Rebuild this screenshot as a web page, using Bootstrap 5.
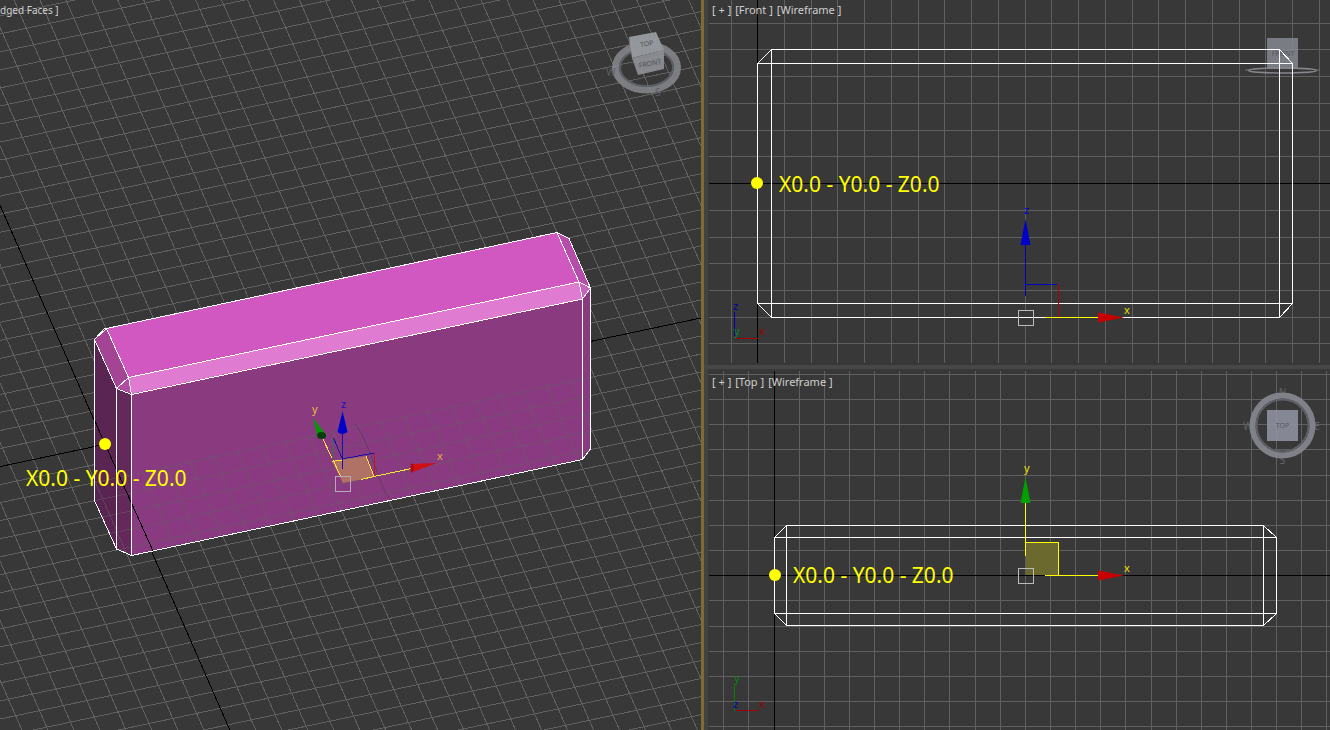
<!DOCTYPE html>
<html lang="en">
<head>
<meta charset="utf-8">
<meta name="viewport" content="width=device-width, initial-scale=1">
<title>Viewports</title>
<link rel="stylesheet" href="https://cdn.jsdelivr.net/npm/bootstrap@5.3.0/dist/css/bootstrap.min.css">
<style>
  body { background: #383838; font-family: "Noto Sans", sans-serif; }
  .workspace { display: grid; grid-template-columns: 701fr 629fr; }
  .ortho { display: grid; grid-template-rows: 1fr 1fr; border-left: 3px solid #7d6c34; }
  .viewport { background: #383838; min-height: 0; }
  .ortho .viewport { box-shadow: inset 4px 0 0 #424242; }
  .split { border-top: 4px solid #474747; }
  .vlabel { top: 2px; left: 8px; gap: 4px; z-index: 2; }
  .split .vlabel { top: 5px; }
  .vlabel button { border: 0; padding: 0; background: none; color: #cfcfcf; font-size: 11px; line-height: 16px; white-space: pre; }
  .flush { left: 0; }
  .flush button { font-size: 10px; }
  .grid line { stroke: #606060; }
  .grid .axis { stroke: #000; }
  .crisp { shape-rendering: crispEdges; }
  .wire { fill: none; stroke: #fff; }
  .coord { font-size: 21px; fill: #ff0; }
  .tick { font-size: 11px; }
  .cube { font-size: 7px; fill: #55585e; text-anchor: middle; }
  .compass { font-size: 10px; fill: #62666d; text-anchor: middle; }
</style>
</head>
<body>
<main class="workspace vw-100 vh-100 overflow-hidden">
  <section class="viewport position-relative overflow-hidden" aria-label="Perspective">
    <div class="vlabel flush position-absolute d-flex"><button type="button">dged Faces ]</button></div>
    <svg class="d-block w-100 h-100" role="img" aria-label="Shaded box">
      <defs><clipPath id="ground"><path d="M94 480 590 375V449L582 459 131 555 116 549 94 500Z"/></clipPath></defs>
      <g class="grid crisp" id="grid-persp"></g>
      <!-- shaded faces -->
      <g stroke="none">
        <path fill="#5b2553" d="M94.500 339 116.500 388V549L94.500 500Z"/>
        <path fill="#64295b" d="M116.500 388 131.500 394V555L116.500 549Z"/>
        <path fill="#8a3b80" d="M131.500 394 582.500 299V459L131.500 555Z"/>
        <path fill="#8a3b80" d="M582.500 299 590.500 288V449L582.500 459Z"/>
        <path fill="#d058c0" d="M106.500 328 557 232 579 282 128.500 377Z"/>
        <path fill="#a34494" d="M94.500 339 106.500 328 128.500 377 116.500 388Z"/>
        <path fill="#b14ca3" d="M116.500 388 128.500 377 131.500 394Z"/>
        <path fill="#df7bd1" d="M128.500 377 579 282 582.500 299 131.500 394Z"/>
        <path fill="#b84cab" d="M557 232 568.500 238 590.500 288 579 282Z"/>
        <path fill="#c964bc" d="M579 282 590.500 288 582.500 299Z"/>
      </g>
      <g class="grid crisp" id="grid-over" clip-path="url(#ground)" opacity=".5"></g>
      <path class="crisp" d="M94 419 105 444 153 551M94 446.500 105 444" fill="none" stroke="#000"/>
      <path d="M355 423Q366 440 375 466T390 500" fill="none" stroke="#6d3569"/>
      <g class="wire crisp">
        <path d="M94.500 339.500 104 329 106.500 328.500 557 232.500 569 238.500 590.500 288V449L582.500 459.500 131.500 555.500 116.500 549 94.500 500.500Z"/>
        <path d="M94.500 339.500 106.500 328.500 128.500 377.500 116.500 388.500ZM116.500 388.500 131.500 394.500 128.500 377.500 579 282 582.500 299 131.500 394.500V555M116.500 388.500V549M557 232.500 579 282 590.500 288 582.500 299V459"/>
      </g>
      <!-- move gizmo -->
      <path fill="#b07264" d="M332 461 366 456 374 477 343 483Z"/>
      <g fill="none" class="crisp">
        <path stroke="#ffe33c" d="M322 437 341 477M332 461.500 342 460M366 456 374 476.500M361 479.500 374 476.500 414 468"/>
        <path stroke="#1810a8" d="M342 459 374 453M333.500 438 342 458"/>
        <path fill="#1810a8" d="M342 432h1v37h-1z"/>
        <path stroke="#33704f" d="M332.500 438V460"/>
        <path stroke="#c01525" d="M374.500 453V476"/>
        <path stroke="#b9aab9" d="M335.500 476.500H350.500V491.500H335.500Z"/>
      </g>
      <path fill="#0000c8" d="M342.500 411 347.500 432Q342 436 337.500 432Z"/>
      <path fill="#0b930b" d="M313 418 325.500 434 317.500 438Z"/><ellipse cx="321.500" cy="435.500" rx="4.500" ry="3.500" fill="#063f0a"/>
      <path fill="#d30e0e" d="M411 464 437 463 411 472.500Z"/><ellipse cx="412" cy="468" rx="1.500" ry="4.500" fill="#a40a10"/>
      <g class="tick"><text x="312" y="413" fill="#e9bd3d">y</text><text x="341" y="408" fill="#1c10b5">z</text><text x="437" y="460" fill="#e2b04c">x</text></g>
      <circle cx="105" cy="444" r="6" fill="#ff0"/>
      <text class="coord" x="26" y="486">X0.0 - Y0.0 - Z0.0</text>
      <!-- view cube -->
      <g opacity=".88">
        <ellipse cx="646.500" cy="67.500" rx="31" ry="22.500" fill="none" stroke="#85878c" stroke-width="7"/>
        <ellipse cx="646.500" cy="67.500" rx="26.500" ry="18.500" fill="none" stroke="#62656b" stroke-width="2"/>
        <path fill="#a0a3a8" d="M629 37 656 32 664 50 632 58Z"/>
        <path fill="#92959b" d="M632 58 664 50V69L638 75Z"/>
        <path fill="#868a91" d="M629 37 632 58 638 75 632 57Z"/>
        <text class="cube" transform="rotate(-10 647 45)" x="647" y="46">TOP</text>
        <text class="cube" transform="rotate(-10 650 64)" x="650" y="66">FRONT</text>
        <text class="compass" x="658" y="96">S</text><text class="compass" x="611" y="76">W</text>
      </g>
    </svg>
  </section>

  <div class="ortho">
    <section class="viewport position-relative overflow-hidden" aria-label="Front">
      <div class="vlabel position-absolute d-flex"><button type="button">[ + ]</button><button type="button">[Front ]</button><button type="button">[Wireframe ]</button></div>
      <svg class="d-block w-100 h-100" role="img" aria-label="Front wireframe">
        <g transform="translate(-704 0)">
          <g class="grid crisp" id="grid-front"></g>
          <g>
            <rect x="1267" y="38" width="31" height="31" fill="#858890" opacity=".85"/>
            <text class="cube" x="1283" y="56">FRONT</text>
            <ellipse cx="1282.500" cy="70.500" rx="34" ry="2.500" fill="none" stroke="#85878c" stroke-width="1.500"/>
            <path d="M1245 70H1251M1314 70H1320" stroke="#777"/>
          </g>
          <path class="wire crisp" d="M757.500 63.500 771.500 49.500H1279.500L1292.500 63.500V303.500L1279.500 317.500H771.500L757.500 303.500ZM757.500 63.500H1292.500M757.500 303.500H1292.500M771.500 49.500V317.500M1279.500 49.500V317.500"/>
          <g class="crisp">
            <path fill="#0000c0" d="M1025 244h1v52h-1zM1026 284h31v1h-31z"/>
            <path fill="#b00000" d="M1058 284h1v33h-1z"/>
            <path fill="#ff0" d="M1045 317h53v1h-53z"/>
            <path fill="#383838" stroke="#bbb" d="M1018.500 310.500H1033.500V325.500H1018.500Z"/>
            <path fill="#fff" d="M1019 317h14v1h-14z"/>
            <path fill="#0000b0" d="M734 312h1v24h-1z"/><path fill="#a00000" d="M736 338h23v1h-23z"/>
          </g>
          <path fill="#0000c8" d="M1025.500 219 1030.500 245H1020.500Z"/><path fill="#c80000" d="M1098 312.500 1124 317.500 1098 322.500Z"/>
          <g class="tick"><text x="1024" y="214" fill="#0000d0">z</text><text x="1124" y="314" fill="#e8e000">x</text><text x="733" y="310" fill="#0000a8">z</text><text x="734" y="335" fill="#078527">y</text><text x="759" y="335" fill="#900">x</text></g>
          <circle cx="757" cy="183" r="6" fill="#ff0"/>
          <text class="coord" x="779" y="192">X0.0 - Y0.0 - Z0.0</text>
        </g>
      </svg>
    </section>

    <section class="viewport split position-relative overflow-hidden" aria-label="Top">
      <div class="vlabel position-absolute d-flex"><button type="button">[ + ]</button><button type="button">[Top ]</button><button type="button">[Wireframe ]</button></div>
      <svg class="d-block w-100 h-100" role="img" aria-label="Top wireframe">
        <g transform="translate(-704 -369)">
          <g class="grid crisp" id="grid-top"></g>
          <g>
            <g class="compass"><text x="1282.500" y="396">N</text><text x="1282.500" y="464">S</text><text x="1248" y="430">W</text><text x="1317" y="430">E</text></g>
            <circle cx="1282.500" cy="425.500" r="30" fill="none" stroke="#85878e" stroke-width="6" opacity=".93"/>
            <circle cx="1282.500" cy="425.500" r="26" fill="none" stroke="#5d6066" stroke-width="2"/>
            <rect x="1267" y="410" width="31" height="31" fill="#9093a0" opacity=".88"/>
            <text class="cube" x="1282.500" y="428">TOP</text>
          </g>
          <path class="wire crisp" d="M774.500 537.500 786.500 525.500H1263.500L1276.500 537.500V613.500L1263.500 625.500H786.500L774.500 613.500ZM774.500 537.500H1276.500M774.500 613.500H1276.500M786.500 525.500V625.500M1263.500 525.500V625.500"/>
          <rect x="1026" y="543" width="32" height="32" fill="#6b692d"/>
          <g class="crisp">
            <path fill="#ff0" d="M1025 502h1v54h-1zM1025 542h34v1h-34zM1058 542h1v34h-1zM1045 575h53v1h-53z"/>
            <path fill="none" stroke="#bbb" d="M1018.500 568.500H1033.500V583.500H1018.500Z"/>
            <path fill="#087e08" d="M734 685h1v26h-1z"/><path fill="#a00000" d="M736 710h23v1h-23z"/>
          </g>
          <path fill="#00a000" d="M1025.500 477 1030.500 503H1020.500Z"/><path fill="#c80000" d="M1098 570.500 1124 575.500 1098 580.500Z"/>
          <g class="tick"><text x="1024" y="472" fill="#e8e000">y</text><text x="1124" y="572" fill="#e8e000">x</text><text x="734" y="682" fill="#078507">y</text><text x="733" y="708" fill="#0000b0">z</text><text x="759" y="708" fill="#900">x</text></g>
          <circle cx="775" cy="575" r="6" fill="#ff0"/>
          <text class="coord" x="793" y="583">X0.0 - Y0.0 - Z0.0</text>
        </g>
      </svg>
    </section>
  </div>
</main>
<script src="https://cdn.jsdelivr.net/npm/bootstrap@5.3.0/dist/js/bootstrap.bundle.min.js"></script>
<script>
  const NS = "http://www.w3.org/2000/svg";
  function rule(host, x1, y1, x2, y2, axis) {
    const l = document.createElementNS(NS, "line");
    Object.entries({ x1, y1, x2, y2 }).forEach(([k, v]) => l.setAttribute(k, v));
    if (axis) { l.setAttribute("class", "axis"); host.append(l); } else host.prepend(l);
  }
  // Ground plane: two families of evenly spaced parallel lines.
  for (const id of ["grid-persp", "grid-over"]) {
    const g = document.getElementById(id), over = id === "grid-over";
    for (let k = -26; k <= 24; k++) if (k || !over)
      rule(g, 0, 466.6 + 18.03 * k, 701, 318 + 18.03 * k, k === 0);
    for (let k = -9; k <= 31; k++) if (k || !over)
      rule(g, -89.8 + 25.95 * k, 0, 229.8 + 25.98 * k, 730, k === 0);
  }
  function flat(id, x0, dx, nx, ax, y0, dy, ny, ay, top, bottom) {
    const g = document.getElementById(id);
    for (let i = 0; i < nx; i++) { const x = Math.floor(x0 + dx * i) + 0.5; rule(g, x, top, x, bottom, i === ax); }
    for (let i = 0; i < ny; i++) { const y = Math.floor(y0 + dy * i) + 0.5; rule(g, 709, y, 1330, y, i === ay); }
  }
  flat("grid-front", 731, 26.74, 23, 1, 23.25, 26.72, 13, 6, 0, 363);
  flat("grid-top", 723.8, 25.13, 25, 2, 374.4, 25.16, 15, 8, 371, 730);
</script>
</body>
</html>
